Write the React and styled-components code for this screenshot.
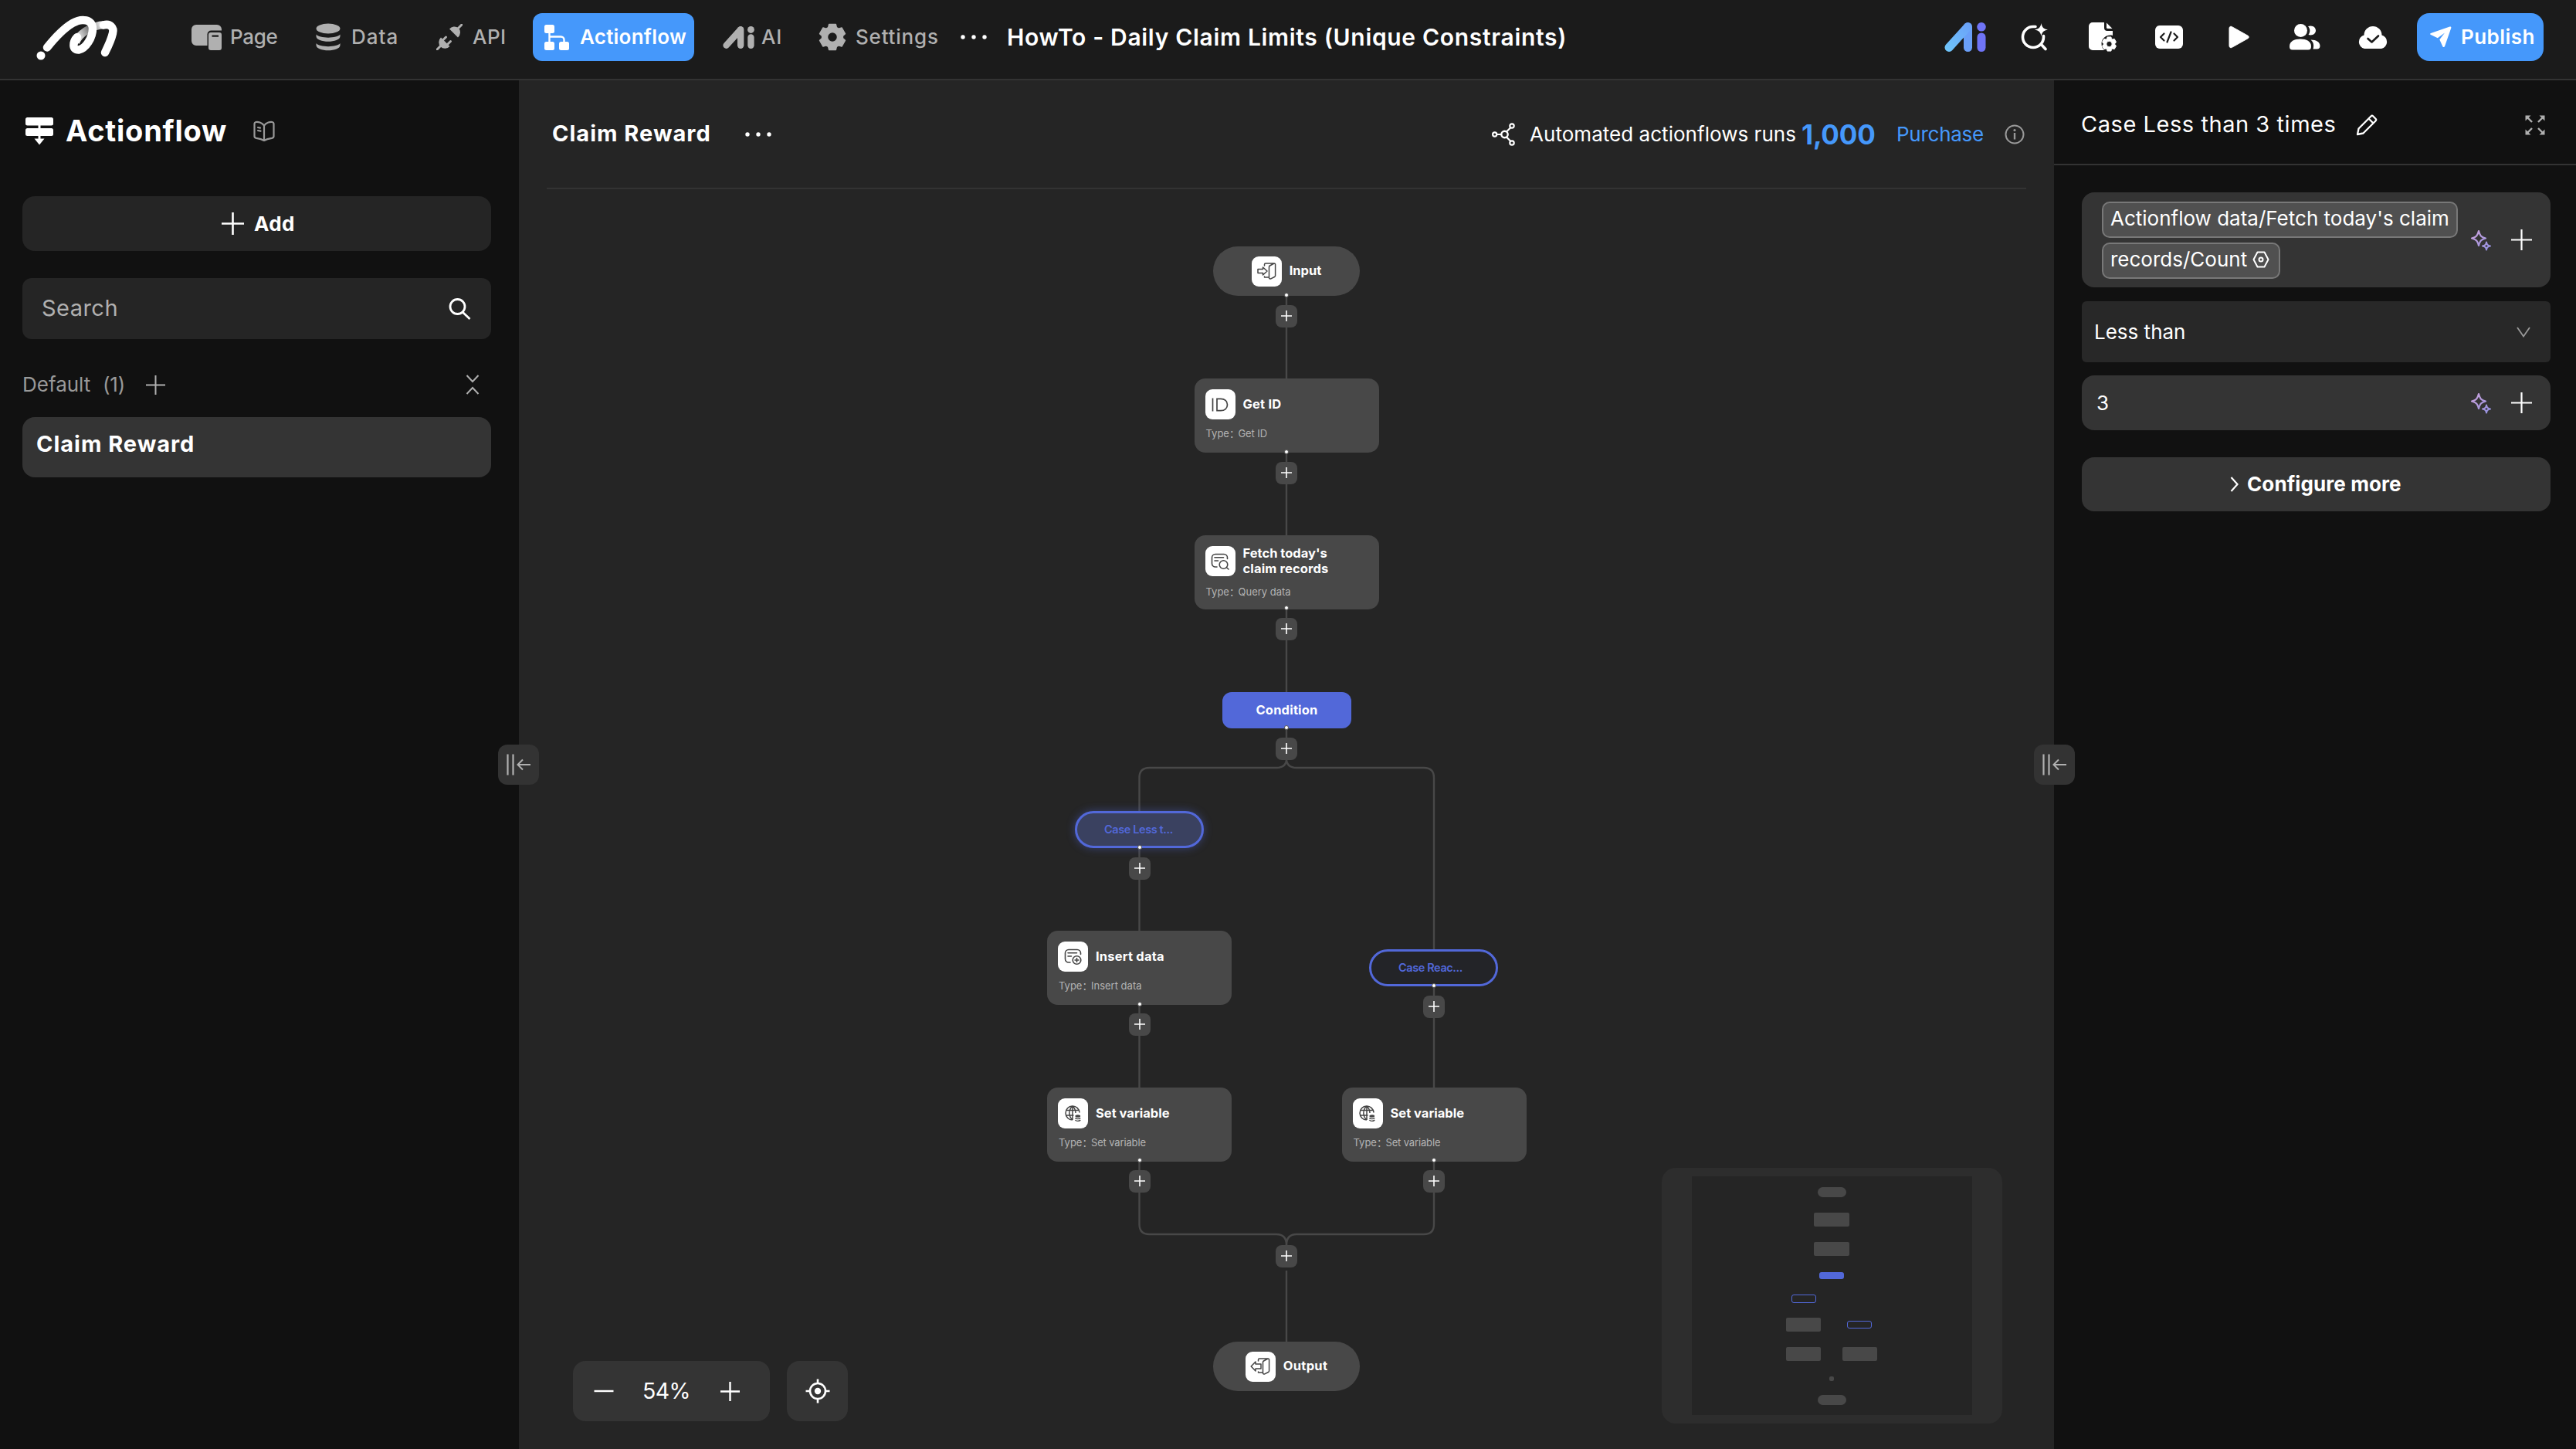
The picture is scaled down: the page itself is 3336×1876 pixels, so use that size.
import React from "react";
import styled, { createGlobalStyle } from "styled-components";

const GlobalStyle = createGlobalStyle`
  * { box-sizing: border-box; }
  html, body { margin: 0; padding: 0; background: #1b1b1b; }
`;

const FAMILY = `Inter, "Noto Sans CJK SC", "Liberation Sans", sans-serif`;

const Shell = styled.div`
  width: 3336px;
  height: 1876px;
  display: flex;
  flex-direction: column;
  overflow: hidden;
  font-family: ${FAMILY};
  color: #fff;
  background: #111;
`;

const Label = styled.span`
  white-space: nowrap;
  line-height: 1.2;
  font-size: ${(p) => p.$size || 26}px;
  font-weight: ${(p) => p.$weight || 400};
  color: ${(p) => p.$color || "inherit"};
  letter-spacing: ${(p) => p.$track || 0}px;
`;

/* ---------- top bar ---------- */
const TopBar = styled.header`
  flex: none;
  height: 104px;
  display: flex;
  align-items: center;
  padding: 0 42px 6px 40px;
  background: #1b1b1b;
  border-bottom: 2px solid #333;
`;
const LogoBox = styled.div`
  width: 120px;
  height: 70px;
  margin-right: 74px;
  display: flex;
`;
const Nav = styled.nav`
  display: flex;
  align-items: center;
  color: #b0b0b0;
`;
const NavItem = styled.div`
  display: flex;
  align-items: center;
  height: 62px;
  width: ${(p) => p.$w}px;
  margin-right: ${(p) => p.$after}px;
  padding-left: 14px;
  gap: ${(p) => p.$gap}px;
  border-radius: 12px;
  background: ${(p) => (p.$active ? "#4598fb" : "transparent")};
  color: ${(p) => (p.$active ? "#fff" : "inherit")};
`;
const Tools = styled.div`
  margin-left: auto;
  display: flex;
  align-items: center;
`;
const ToolSlot = styled.div`
  display: flex;
  width: ${(p) => p.$w}px;
`;
const Publish = styled.div`
  display: flex;
  align-items: center;
  height: 62px;
  width: 164px;
  padding-left: 17px;
  gap: 12px;
  border-radius: 16px;
  background: #4598fb;
`;

/* ---------- columns ---------- */
const Body = styled.div`
  flex: 1;
  min-height: 0;
  display: flex;
`;
const LeftPanel = styled.aside`
  width: 672px;
  flex: none;
  display: flex;
  flex-direction: column;
  padding: 36px 36px 0 29px;
  background: #111;
`;
const PanelTitle = styled.div`
  height: 60px;
  display: flex;
  align-items: center;
  padding-left: 4px;
`;
const TitleText = styled.div`
  display: flex;
  width: 243px;
  margin-left: 16px;
`;
const AddButton = styled.div`
  height: 71px;
  margin-top: 54px;
  display: flex;
  align-items: center;
  padding-left: 258px;
  gap: 13px;
  border-radius: 16px;
  background: #252525;
`;
const SearchBox = styled.div`
  height: 79px;
  margin-top: 35px;
  display: flex;
  align-items: center;
  justify-content: space-between;
  padding: 0 25px;
  border-radius: 12px;
  background: #252525;
`;
const GroupRow = styled.div`
  height: 50px;
  margin-top: 34px;
  display: flex;
  align-items: center;
  color: #999;
`;
const GroupCell = styled.div`
  display: flex;
  width: ${(p) => p.$w}px;
`;
const FlowItem = styled.div`
  height: 78px;
  margin-top: 17px;
  display: flex;
  align-items: center;
  padding: 0 18px 7px;
  border-radius: 16px;
  background: #343434;
`;

const Main = styled.main`
  position: relative;
  z-index: 1;
  width: 1988px;
  flex: none;
  display: flex;
  flex-direction: column;
  background: #252525;
`;
const MainHeader = styled.div`
  height: 141px;
  flex: none;
  margin: 0 36px;
  padding: 0 2px 0 7px;
  display: flex;
  align-items: center;
  border-bottom: 2px solid #333;
`;
const TitleSlot = styled.div`
  display: flex;
  width: 249px;
`;
const Quota = styled.div`
  margin-left: auto;
  display: flex;
  align-items: center;
`;
const QuotaCell = styled.div`
  display: flex;
  align-items: center;
  width: ${(p) => p.$w}px;
`;
const Handle = styled.div`
  position: absolute;
  top: 860px;
  left: ${(p) => p.$left}px;
  width: 53px;
  height: 52px;
  display: flex;
  align-items: center;
  justify-content: center;
  border-radius: 12px;
  background: #333;
`;

/* ---------- canvas ---------- */
const Canvas = styled.div`
  position: relative;
  flex: 1;
`;
const Edges = styled.svg`
  position: absolute;
  left: 0;
  top: 0;
`;
const Placed = styled.div`
  position: absolute;
  left: ${(p) => p.$x}px;
  top: ${(p) => p.$y}px;
`;
const Terminal = styled(Placed)`
  width: 190px;
  height: 64px;
  display: flex;
  align-items: center;
  justify-content: center;
  gap: 10px;
  border-radius: 32px;
  background: #484848;
`;
const Card = styled(Placed)`
  width: 239px;
  height: 96px;
  display: flex;
  flex-direction: column;
  padding: 14px 14px 0;
  border-radius: 14px;
  background: #484848;
`;
const CardHead = styled.div`
  display: flex;
  align-items: center;
  gap: 10px;
  height: 39px;
`;
const CardLines = styled.div`
  display: flex;
  flex-direction: column;
`;
const CardType = styled.div`
  display: flex;
  margin-top: ${(p) => (p.$low ? 13 : 11)}px;
  padding-left: 1px;
  color: #b4b4b4;
`;
const TypeKey = styled.div`
  display: flex;
  width: 42px;
`;
const IconTile = styled.div`
  width: 39px;
  height: 39px;
  flex: none;
  display: flex;
  align-items: center;
  justify-content: center;
  border-radius: 9px;
  background: #fff;
`;
const ConditionNode = styled(Placed)`
  width: 167px;
  height: 47px;
  display: flex;
  align-items: center;
  justify-content: center;
  border-radius: 12px;
  background: #5268d9;
`;
const CaseNode = styled(Placed)`
  width: 167px;
  height: 48px;
  display: flex;
  align-items: center;
  padding: 0 0 1px 35px;
  border: 3px solid #5268d9;
  border-radius: 24px;
  color: #5268d9;
  background: ${(p) => (p.$on ? "#3a4160" : "#232428")};
  box-shadow: ${(p) => (p.$on ? "0 0 12px rgba(82, 104, 217, 0.45)" : "none")};
`;
const PlusBox = styled(Placed)`
  width: 28px;
  height: 29px;
  display: flex;
  align-items: center;
  justify-content: center;
  padding-bottom: 1px;
  border-radius: 8px;
  background: #484848;
`;
const Port = styled(Placed)`
  width: 6px;
  height: 6px;
  border: 1px solid #555;
  border-radius: 3px;
  background: #fff;
`;

const ZoomBar = styled.div`
  position: absolute;
  left: 70px;
  top: 1517px;
  display: flex;
  gap: 22px;
`;
const ZoomGroup = styled.div`
  width: 255px;
  height: 78px;
  display: flex;
  align-items: center;
  padding-left: 27px;
  border-radius: 16px;
  background: #343434;
`;
const ZoomValue = styled.div`
  display: flex;
  width: 101px;
  margin-left: 37px;
`;
const ZoomButton = styled.div`
  width: 79px;
  height: 78px;
  display: flex;
  align-items: center;
  justify-content: center;
  border-radius: 16px;
  background: #343434;
`;

const MiniMap = styled.div`
  position: absolute;
  left: 1480px;
  top: 1267px;
  width: 441px;
  height: 331px;
  display: flex;
  padding: 11px 39px;
  border-radius: 18px;
  background: #2d2d2d;
`;
const MiniView = styled.div`
  position: relative;
  flex: 1;
  background: #252525;
`;
const MiniNode = styled(Placed)`
  width: ${(p) => p.$w}px;
  height: ${(p) => p.$h}px;
  border-radius: ${(p) => p.$r}px;
  background: ${(p) => p.$fill || "transparent"};
  border: ${(p) => (p.$fill ? "none" : "1px solid #5268d9")};
`;

/* ---------- right panel ---------- */
const RightPanel = styled.aside`
  width: 676px;
  flex: none;
  display: flex;
  flex-direction: column;
  background: #111;
`;
const RightHeader = styled.div`
  height: 110px;
  display: flex;
  align-items: center;
  padding: 7px 40px 0 35px;
  border-bottom: 2px solid #333;
`;
const RightTitle = styled.div`
  display: flex;
  width: 356px;
`;
const Spacer = styled.div`
  flex: 1;
`;
const RightBody = styled.div`
  display: flex;
  flex-direction: column;
  padding: 35px 33px 0 36px;
`;
const Field = styled.div`
  height: ${(p) => p.$h}px;
  margin-bottom: ${(p) => p.$after}px;
  display: flex;
  align-items: center;
  justify-content: space-between;
  padding: 0 ${(p) => p.$pr}px 0 ${(p) => p.$pl}px;
  border-radius: ${(p) => p.$r}px;
  background: ${(p) => p.$bg};
`;
const Tags = styled.div`
  display: flex;
  flex-direction: column;
  align-items: flex-start;
  gap: 6px;
`;
const Tag = styled.div`
  height: 47px;
  width: ${(p) => p.$w}px;
  display: flex;
  align-items: center;
  padding: 0 0 2px 9px;
  gap: 7px;
  border: 2px solid #787878;
  border-radius: 10px;
  background: #505050;
`;
const FieldActions = styled.div`
  display: flex;
  align-items: center;
  gap: 25px;
`;
const ConfigureButton = styled.div`
  height: 70px;
  margin-top: 17px;
  display: flex;
  align-items: center;
  padding-left: 192px;
  gap: 11px;
  border-radius: 16px;
  background: #343434;
`;

/* ---------- icons ---------- */
const Glyph = styled.svg`
  flex: none;
`;
const Svg = ({ w, h, children }) => (
  <Glyph width={w} height={h} viewBox={`0 0 ${w} ${h}`} fill="none">
    {children}
  </Glyph>
);

const Logo = () => (
  <Svg w={120} h={70}>
    <defs>
      <linearGradient id="logoShade" x1="58" y1="36" x2="94" y2="16" gradientUnits="userSpaceOnUse">
        <stop offset="0" stopColor="#fff" />
        <stop offset="0.5" stopColor="#777" />
        <stop offset="1" stopColor="#fff" />
      </linearGradient>
    </defs>
    <circle cx="13" cy="59" r="5.5" fill="#fff" />
    <path d="M58 42C62 32 76 20 96 19" stroke="url(#logoShade)" strokeWidth="10" />
    <path d="M94 19.500C103 17 108 23 106 30C104 39 100 47 96 55" stroke="#fff" strokeWidth="10.500" strokeLinecap="round" />
    <path d="M21 48.500C31 36 42 24 54 17C66 10 80 12 80 24C80 36 71 50 62 51.500C53 52 54 41 60 35" stroke="#fff" strokeWidth="10.500" strokeLinecap="round" />
  </Svg>
);
const PageIcon = () => (
  <Svg w={40} h={34}>
    <path d="M6 1H33A6 6 0 0 1 39 7V8.500H26A5 5 0 0 0 20.500 14V28H6A6 6 0 0 1 0 22V7A6 6 0 0 1 6 1Z" fill="#b0b0b0" />
    <path fillRule="evenodd" d="M25 11H36A3 3 0 0 1 39 14V31A3 3 0 0 1 36 34H25A3 3 0 0 1 22 31V14A3 3 0 0 1 25 11ZM26.500 14.500V16.800H35V14.500Z" fill="#b0b0b0" />
  </Svg>
);
const DataIcon = () => (
  <Svg w={32} h={36}>
    <ellipse cx="16" cy="7" rx="15.500" ry="6.500" fill="#b0b0b0" />
    <path d="M0.500 14.500C4 20 28 20 31.500 14.500V17C31.500 26 0.500 26 0.500 17Z" fill="#b0b0b0" />
    <path d="M0.500 26C4 31.500 28 31.500 31.500 26V28.500C31.500 37.500 0.500 37.500 0.500 28.500Z" fill="#b0b0b0" />
  </Svg>
);
const ApiIcon = () => (
  <Svg w={34} h={34}>
    <path d="M1 33L6 28M28 6L33 1" stroke="#b0b0b0" strokeWidth="3" strokeLinecap="round" />
    <path d="M6 17.500L17.500 29A8.500 8.500 0 0 1 5.500 29.500A8.500 8.500 0 0 1 6 17.500Z" fill="#b0b0b0" />
    <path d="M8.500 21L12.500 17M14.500 26.500L18.500 22.500" stroke="#b0b0b0" strokeWidth="3" strokeLinecap="round" />
    <path d="M17 6.500L28 17.500A8.500 8.500 0 0 0 28.500 5A8.500 8.500 0 0 0 17 6.500Z" fill="#b0b0b0" />
  </Svg>
);
const FlowIcon = () => (
  <Svg w={33} h={33}>
    <rect x="1" y="0" width="13" height="11" rx="2.500" fill="#fff" />
    <rect x="1" y="22" width="13" height="11" rx="2.500" fill="#fff" />
    <rect x="20" y="22" width="13" height="11" rx="2.500" fill="#fff" />
    <path d="M7.500 10V23M7.500 15.500H22.500A4 4 0 0 1 26.500 19.500V23" stroke="#fff" strokeWidth="2.400" />
  </Svg>
);
const AiGlyph = ({ w, h, a = "#b0b0b0", b = "#b0b0b0", c = "#b0b0b0" }) => (
  <Glyph width={w} height={h} viewBox="0 0 54 38" fill="none">
    <defs>
      <linearGradient id={`ai${w}`} x1="0" y1="38" x2="34" y2="0" gradientUnits="userSpaceOnUse">
        <stop offset="0" stopColor={a} />
        <stop offset="1" stopColor={b} />
      </linearGradient>
    </defs>
    <path d="M30.500 5.500V32.500" stroke={b} strokeWidth="11" strokeLinecap="round" />
    <path d="M6 32.500L30 6" stroke={`url(#ai${w})`} strokeWidth="11" strokeLinecap="round" />
    <circle cx="48" cy="5.800" r="5.800" fill={c} />
    <path d="M48 19V32.500" stroke={c} strokeWidth="11" strokeLinecap="round" />
  </Glyph>
);
const gearPath = (cx, cy, r, n, tooth) => {
  const pts = [];
  for (let i = 0; i < n; i++) {
    const a = (i * 2 * Math.PI) / n - Math.PI / 2;
    const half = Math.PI / n;
    [[-0.5, r], [0.5, r], [0.78, r - tooth], [1.22, r - tooth]].forEach(([k, rr]) => {
      const t = a + k * half;
      pts.push(`${(cx + rr * Math.cos(t)).toFixed(2)} ${(cy + rr * Math.sin(t)).toFixed(2)}`);
    });
  }
  return `M${pts.join("L")}Z`;
};
const GearIcon = () => (
  <Svg w={36} h={36}>
    <path
      fillRule="evenodd"
      d={`${gearPath(18, 18, 17, 6, 3.5)}M18 11.500A6.500 6.500 0 1 0 18 24.500A6.500 6.500 0 1 0 18 11.500Z`}
      fill="#b0b0b0"
      stroke="#b0b0b0"
      strokeWidth="1.500"
      strokeLinejoin="round"
    />
  </Svg>
);
const Dots = ({ gap = 14 }) => (
  <Svg w={36} h={8}>
    <circle cx={18 - gap} cy="4" r="2.700" fill="#fff" />
    <circle cx="18" cy="4" r="2.700" fill="#fff" />
    <circle cx={18 + gap} cy="4" r="2.700" fill="#fff" />
  </Svg>
);
const SparkSearchIcon = () => (
  <Svg w={36} h={36}>
    <path d="M19 4.500H16A13.500 13.500 0 1 0 29.500 18V16.500M26 27L32 33.500" stroke="#fff" strokeWidth="3.600" strokeLinecap="round" />
    <path d="M26.500 0C27.500 5.500 29.500 7.500 35 8.500C29.500 9.500 27.500 11.500 26.500 17C25.500 11.500 23.500 9.500 18 8.500C23.500 7.500 25.500 5.500 26.500 0Z" fill="#fff" />
  </Svg>
);
const FileGearIcon = () => (
  <Svg w={36} h={38}>
    <path d="M5 0H20V7A4 4 0 0 0 24 11H31V17C24 15 17 20 16.500 27C16.300 31 18 34 20 36H5A5 5 0 0 1 0 31V5A5 5 0 0 1 5 0Z" fill="#fff" />
    <path d="M23 0.500L30.500 8H24.500A1.500 1.500 0 0 1 23 6.500Z" fill="#fff" />
    <path fillRule="evenodd" d={`${gearPath(26.5, 28, 9.4, 6, 2)}M26.500 24.300A3.700 3.700 0 1 0 26.500 31.700A3.700 3.700 0 1 0 26.500 24.300Z`} fill="#fff" stroke="#fff" />
  </Svg>
);
const CodeIcon = () => (
  <Svg w={36} h={30}>
    <rect width="36" height="30" rx="6" fill="#fff" />
    <path d="M11.500 10.500L7 15L11.500 19.500M24.500 10.500L29 15L24.500 19.500M20.500 8.500L15.500 21.500" stroke="#1b1b1b" strokeWidth="2.200" strokeLinecap="round" strokeLinejoin="round" />
  </Svg>
);
const PlayIcon = () => (
  <Svg w={29} h={30}>
    <path d="M2 3.500V26.500C2 28.500 4 29.300 5.500 28.300L26 16.800C27.600 15.900 27.600 14.100 26 13.200L5.500 1.700C4 0.700 2 1.500 2 3.500Z" fill="#fff" stroke="#fff" />
  </Svg>
);
const UsersIcon = () => (
  <Svg w={40} h={34}>
    <circle cx="14.500" cy="8.500" r="8.500" fill="#fff" />
    <path d="M0 29C0 22.500 6 19.500 14 19.500S28 22.500 28 29C28 32 27 33.500 24 33.500H4C1 33.500 0 32 0 29Z" fill="#fff" />
    <path d="M24 3C30 1 34 4.500 34 8.500S30 15.500 24.500 14C27 10.500 27 6.500 24 3Z" fill="#fff" />
    <path d="M27.500 20.500C35 20.500 39.500 23.500 39.500 28.500C39.500 31 38 32.500 35.500 32.500H30.500C32 27.500 31 23.500 27.500 20.500Z" fill="#fff" />
  </Svg>
);
const CloudIcon = () => (
  <Svg w={40} h={30}>
    <path d="M9 30A9 9 0 0 1 8.500 12.500A11.500 11.500 0 0 1 31.500 12.500A9 9 0 0 1 31 30Z" fill="#fff" />
    <path d="M13.500 17L18.500 21.500L27 13.500" stroke="#1b1b1b" strokeWidth="2.600" strokeLinecap="round" strokeLinejoin="round" />
  </Svg>
);
const PlaneIcon = () => (
  <Svg w={28} h={28}>
    <path d="M1 9L25.500 0.600C26.800 0.200 27.700 1 27.300 2.300L19 26C18.500 27.400 17 27.400 16.400 26.200L12.300 17.300L19 8.500L9.800 15.200L1 11C-0.300 10.300 -0.200 9.500 1 9Z" fill="#fff" />
  </Svg>
);
const PlusIcon = ({ size, stroke, color = "#fff" }) => (
  <Svg w={size} h={size}>
    <path d={`M${size / 2} 0V${size}M0 ${size / 2}H${size}`} stroke={color} strokeWidth={stroke} />
  </Svg>
);
const StackDownIcon = () => (
  <Svg w={36} h={36}>
    <rect width="36" height="10.500" rx="2.500" fill="#fff" />
    <rect y="14" width="36" height="10" rx="2.500" fill="#fff" />
    <path d="M18 9V28" stroke="#fff" strokeWidth="3" />
    <path d="M11.500 27.500H24.500L18 35.500Z" fill="#fff" />
  </Svg>
);
const BookIcon = () => (
  <Svg w={28} h={28}>
    <path d="M14 6.500C11 2.500 6 1.500 3.500 2C2 2.300 1.500 3 1.500 4.500V20.500C1.500 22 2.500 22.500 4 22.800C8 23.300 11 24 14 26C17 24 20 23.300 24 22.800C25.500 22.500 26.500 22 26.500 20.500V4.500C26.500 3 26 2.300 24.500 2C22 1.500 17 2.500 14 6.500ZM14 6.500V26M6 9L9 9.600M6 13L9.500 13.600" stroke="#999" strokeWidth="2.200" strokeLinecap="round" strokeLinejoin="round" />
  </Svg>
);
const SearchIcon = () => (
  <Svg w={30} h={28}>
    <circle cx="11.500" cy="11" r="9.500" stroke="#fff" strokeWidth="2.800" />
    <path d="M18 18L27.500 27" stroke="#fff" strokeWidth="2.800" />
  </Svg>
);
const CollapseIcon = () => (
  <Svg w={18} h={26}>
    <path d="M1.500 1L9 9L16.500 1M1.500 25L9 17L16.500 25" stroke="#b0b0b0" strokeWidth="2" />
  </Svg>
);
const NetworkIcon = () => (
  <Svg w={30} h={30}>
    <circle cx="3.700" cy="15" r="2.600" stroke="#fff" strokeWidth="2.200" />
    <circle cx="16.500" cy="15" r="4.200" stroke="#fff" strokeWidth="2.400" />
    <circle cx="26" cy="4" r="2.700" stroke="#fff" strokeWidth="2.200" />
    <circle cx="26" cy="26" r="2.700" stroke="#fff" strokeWidth="2.200" />
    <path d="M6.500 15H12M19 11.500L24 6.500M19 18.500L24 23.500" stroke="#fff" strokeWidth="2.200" />
  </Svg>
);
const InfoIcon = () => (
  <Svg w={26} h={26}>
    <circle cx="13" cy="13" r="11.500" stroke="#999" strokeWidth="2" />
    <path d="M13 11V19.500" stroke="#999" strokeWidth="2.400" />
    <circle cx="13" cy="7.500" r="1.600" fill="#999" />
  </Svg>
);
const HandleIcon = () => (
  <Svg w={34} h={28}>
    <path d="M2.500 0.500V27.500M9.500 0.500V27.500" stroke="#b0b0b0" strokeWidth="2.200" />
    <path d="M32 14H16M22 7.500L15.500 14L22 20.500" stroke="#b0b0b0" strokeWidth="2" />
  </Svg>
);
const DoorIcon = ({ out }) => (
  <Svg w={26} h={22}>
    <path
      d={out ? "M10 8H7V5L1.200 11L7 17V14H14V8H10Z" : "M2 8.500H8.500V6L14 11L8.500 16V13.500H2Z"}
      stroke="#444"
      strokeWidth="1.500"
      strokeLinejoin="round"
    />
    <path d="M10.500 4V2.500A1.500 1.500 0 0 1 12 1H23L17.500 4A2 2 0 0 0 16.500 5.500V19.500A1.500 1.500 0 0 0 18.800 20.800L23.500 18.500A2 2 0 0 0 24.600 17V2.500A1.500 1.500 0 0 0 23 1M10.500 18V19H16" stroke="#444" strokeWidth="1.500" strokeLinejoin="round" strokeLinecap="round" />
  </Svg>
);
const IdIcon = () => (
  <Svg w={22} h={18}>
    <path d="M1.500 0.500V17.500M7 1.300V16.700H12C17 16.700 20.500 13.500 20.500 9S17 1.300 12 1.300Z" stroke="#444" strokeWidth="1.700" />
  </Svg>
);
const TableIcon = ({ kind }) => (
  <Svg w={24} h={22}>
    <path d="M8 18H6A4.500 4.500 0 0 1 1.500 13.500V6A4.500 4.500 0 0 1 6 1.500H17A4.500 4.500 0 0 1 21.500 6V7.500M5 5.800H16.500M5 10H9.500" stroke="#444" strokeWidth="1.600" strokeLinecap="round" />
    <circle cx="16.500" cy="15" r="5.300" stroke="#444" strokeWidth="1.600" />
    {kind === "query" ? (
      <path d="M20.300 18.500L23 21" stroke="#444" strokeWidth="1.600" strokeLinecap="round" />
    ) : (
      <path d="M16.500 12V18M13.500 15H19.500" stroke="#444" strokeWidth="1.600" />
    )}
  </Svg>
);
const GlobeIcon = () => (
  <Svg w={22} h={22}>
    <path d="M10 19A9 9 0 1 1 19 9.500M10 1C4.500 6 4.500 14 10 19M10 1C13 4 14 7 14 10M1.500 6.500H18.500M1.500 13H11.500M10 1V19" stroke="#444" strokeWidth="1.500" />
    <ellipse cx="16.800" cy="14" rx="3.400" ry="1.800" fill="#444" />
    <path d="M13.400 16.500C14.500 18 19 18 20.200 16.500M13.400 19C14.500 20.800 19 20.800 20.200 19" stroke="#444" strokeWidth="1.400" />
  </Svg>
);
const TargetIcon = () => (
  <Svg w={32} h={32}>
    <circle cx="16" cy="16" r="10" stroke="#fff" strokeWidth="2.600" />
    <circle cx="16" cy="16" r="4.200" fill="#fff" />
    <path d="M16 0.500V6M16 26V31.500M0.500 16H6M26 16H31.500" stroke="#fff" strokeWidth="2.600" />
  </Svg>
);
const PencilIcon = () => (
  <Svg w={28} h={28}>
    <path d="M2 26L3.500 18.500L19.500 2.500A2 2 0 0 1 22.300 2.500L25.500 5.700A2 2 0 0 1 25.500 8.500L9.500 24.500ZM16.500 5.500L22.500 11.500" stroke="#fff" strokeWidth="2.300" strokeLinejoin="round" />
  </Svg>
);
const ExpandIcon = () => (
  <Svg w={26} h={26}>
    {[0, 90, 180, 270].map((r) => (
      <g key={r} transform={`rotate(${r} 13 13)`}>
        <path d="M0.500 0.500H7.500L0.500 7.500Z" fill="#b0b0b0" />
        <path d="M2.500 2.500L9 9" stroke="#b0b0b0" strokeWidth="2.400" />
      </g>
    ))}
  </Svg>
);
const HexIcon = () => (
  <Svg w={22} h={22}>
    <path d="M6.500 1.500H15.500L20.500 11L15.500 20.500H6.500L1.500 11Z" stroke="#fff" strokeWidth="2" strokeLinejoin="round" />
    <circle cx="11" cy="11" r="2.500" stroke="#fff" strokeWidth="2" />
  </Svg>
);
const SparklesIcon = () => (
  <Svg w={28} h={28}>
    <defs>
      <linearGradient id="spark" x1="0" y1="0" x2="28" y2="28" gradientUnits="userSpaceOnUse">
        <stop offset="0" stopColor="#d0a4dc" />
        <stop offset="1" stopColor="#8f8fe0" />
      </linearGradient>
    </defs>
    <path d="M11 2C12.500 8 14 10 20 11.500C14 13 12.500 15 11 21C9.500 15 8 13 2 11.500C8 10 9.500 8 11 2Z" stroke="url(#spark)" strokeWidth="2.200" strokeLinejoin="round" />
    <path d="M21 16.500C21.700 20 22.500 20.800 26 21.500C22.500 22.200 21.700 23 21 26.500C20.300 23 19.500 22.200 16 21.500C19.500 20.800 20.300 20 21 16.500Z" stroke="url(#spark)" strokeWidth="2" strokeLinejoin="round" />
  </Svg>
);
const ChevronDown = () => (
  <Svg w={18} h={14}>
    <path d="M1 1L9 12.500L17 1" stroke="#999" strokeWidth="1.800" />
  </Svg>
);
const ChevronRight = () => (
  <Svg w={11} h={20}>
    <path d="M1.500 1L9.500 10L1.500 19" stroke="#fff" strokeWidth="2.200" />
  </Svg>
);

/* ---------- flow graph ---------- */
const MID = 994;
const LEFT = 803.5;
const RIGHT = 1185;

const NODE_ICONS = {
  id: <IdIcon />,
  query: <TableIcon kind="query" />,
  insert: <TableIcon kind="insert" />,
  globe: <GlobeIcon />,
};
const cards = [
  { x: MID, y: 245, icon: "id", lines: [["Get ID", 0.2]], type: ["Get ID", -0.1] },
  { x: MID, y: 448, icon: "query", lines: [["Fetch today's", 0], ["claim records", 0.14]], type: ["Query data", 0] },
  { x: LEFT, y: 960, icon: "insert", lines: [["Insert data", 0.2]], type: ["Insert data", 0] },
  { x: LEFT, y: 1163, icon: "globe", lines: [["Set variable", 0]], type: ["Set variable", -0.15] },
  { x: RIGHT, y: 1163, icon: "globe", lines: [["Set variable", 0]], type: ["Set variable", -0.15] },
];
const pluses = [
  [MID, 150], [MID, 353], [MID, 555], [MID, 710], [LEFT, 865],
  [LEFT, 1067], [LEFT, 1270], [RIGHT, 1044], [RIGHT, 1270], [MID, 1367],
];
const ports = [
  [MID, 137], [MID, 340], [MID, 542], [MID, 697], [LEFT, 852],
  [LEFT, 1055], [LEFT, 1257], [RIGHT, 1031], [RIGHT, 1257],
];
const edgePaths = [
  `M${MID} 138V651`,
  `M${MID} 697V737Q${MID} 749 ${MID - 13} 749H${LEFT + 13}Q${LEFT} 749 ${LEFT} 762V805`,
  `M${MID} 737Q${MID} 749 ${MID + 13} 749H${RIGHT - 13}Q${RIGHT} 749 ${RIGHT} 762V984`,
  `M${LEFT} 853V1163`,
  `M${RIGHT} 1032V1163`,
  `M${LEFT} 1258V1340Q${LEFT} 1353 ${LEFT + 13} 1353H${MID - 13}Q${MID} 1353 ${MID} 1367`,
  `M${RIGHT} 1258V1340Q${RIGHT} 1353 ${RIGHT - 13} 1353H${MID + 13}Q${MID} 1353 ${MID} 1367`,
  `M${MID} 1400V1492`,
];
const miniNodes = [
  [163, 14, 37, 13, 7, "#484848"],
  [158, 47, 46, 18, 2, "#484848"],
  [158, 85, 46, 18, 2, "#484848"],
  [165, 124, 32, 9, 3, "#5268d9"],
  [129, 153, 32, 11, 3, null],
  [122, 183, 45, 18, 2, "#484848"],
  [201, 187, 32, 10, 3, null],
  [122, 221, 45, 18, 2, "#484848"],
  [195, 221, 45, 18, 2, "#484848"],
  [178, 259, 6, 6, 2, "#484848"],
  [163, 283, 37, 13, 7, "#484848"],
];

const FlowCanvas = () => (
  <Canvas>
    <Edges width="1988" height="1631">
      {edgePaths.map((d) => (
        <path key={d} d={d} fill="none" stroke="#484848" strokeWidth="2.400" />
      ))}
    </Edges>
    <Terminal $x={899} $y={74}>
      <IconTile><DoorIcon /></IconTile>
      <Label $size={16.5} $weight={700}>Input</Label>
    </Terminal>
    {cards.map((c) => (
      <Card key={`${c.x}-${c.y}`} $x={c.x - 119.5} $y={c.y}>
        <CardHead>
          <IconTile>{NODE_ICONS[c.icon]}</IconTile>
          <CardLines>
            {c.lines.map(([t, track]) => (
              <Label key={t} $size={16.5} $weight={700} $track={track}>{t}</Label>
            ))}
          </CardLines>
        </CardHead>
        <CardType $low={c.lines.length > 1}>
          <TypeKey><Label $size={13}>Type：</Label></TypeKey>
          <Label $size={13} $track={c.type[1]}>{c.type[0]}</Label>
        </CardType>
      </Card>
    ))}
    <ConditionNode $x={911} $y={651}>
      <Label $size={16.5} $weight={700} $track={0.2}>Condition</Label>
    </ConditionNode>
    <CaseNode $on $x={720} $y={805}>
      <Label $size={14.5} $weight={600} $track={-0.4}>Case Less t...</Label>
    </CaseNode>
    <CaseNode $x={1101} $y={984}>
      <Label $size={14.5} $weight={600} $track={-0.4}>Case Reac...</Label>
    </CaseNode>
    <Terminal $x={899} $y={1492}>
      <IconTile><DoorIcon out /></IconTile>
      <Label $size={16.5} $weight={700} $track={0.3}>Output</Label>
    </Terminal>
    {pluses.map(([x, y]) => (
      <PlusBox key={`${x}-${y}`} $x={x - 14} $y={y}><PlusIcon size={14} stroke={1.6} /></PlusBox>
    ))}
    {ports.map(([x, y]) => (
      <Port key={`${x}-${y}`} $x={x - 3} $y={y - 3} />
    ))}
    <ZoomBar>
      <ZoomGroup>
        <Svg w={26} h={26}><path d="M0.500 13H25.500" stroke="#fff" strokeWidth="2.400" /></Svg>
        <ZoomValue><Label $size={28.5} $track={-0.6}>54%</Label></ZoomValue>
        <PlusIcon size={25} stroke={2.4} />
      </ZoomGroup>
      <ZoomButton><TargetIcon /></ZoomButton>
    </ZoomBar>
    <MiniMap>
      <MiniView>
        {miniNodes.map(([x, y, w, h, r, fill]) => (
          <MiniNode key={`${x}-${y}`} $x={x} $y={y} $w={w} $h={h} $r={r} $fill={fill} />
        ))}
      </MiniView>
    </MiniMap>
  </Canvas>
);

export default function App() {
  return (
    <Shell>
      <GlobalStyle />
      <TopBar>
        <LogoBox><Logo /></LogoBox>
        <Nav>
          <NavItem $w={138} $after={23} $gap={10}><PageIcon /><Label $weight={500} $track={-0.3}>Page</Label></NavItem>
          <NavItem $w={135} $after={21} $gap={14}><DataIcon /><Label $weight={500} $track={1}>Data</Label></NavItem>
          <NavItem $w={118} $after={21} $gap={13}><ApiIcon /><Label $weight={500} $track={0.5}>API</Label></NavItem>
          <NavItem $w={209} $after={23} $gap={14} $active><FlowIcon /><Label $weight={600} $track={0.24}>Actionflow</Label></NavItem>
          <NavItem $w={104} $after={20} $gap={9}><AiGlyph w={41} h={29} /><Label $weight={500} $track={0.8}>AI</Label></NavItem>
          <NavItem $w={183} $after={14} $gap={12}><GearIcon /><Label $weight={500} $track={0.8}>Settings</Label></NavItem>
        </Nav>
        <ToolSlot $w={61}><Dots /></ToolSlot>
        <Label $size={30} $weight={600} $track={0.68}>HowTo - Daily Claim Limits (Unique Constraints)</Label>
        <Tools>
          <ToolSlot $w={99}><AiGlyph w={54} h={38} a="#6fc8fb" b="#6a9ff8" c="#6f74f7" /></ToolSlot>
          <ToolSlot $w={88}><SparkSearchIcon /></ToolSlot>
          <ToolSlot $w={86}><FileGearIcon /></ToolSlot>
          <ToolSlot $w={94}><CodeIcon /></ToolSlot>
          <ToolSlot $w={80}><PlayIcon /></ToolSlot>
          <ToolSlot $w={88}><UsersIcon /></ToolSlot>
          <ToolSlot $w={77}><CloudIcon /></ToolSlot>
          <Publish><PlaneIcon /><Label $weight={600} $track={0.45}>Publish</Label></Publish>
        </Tools>
      </TopBar>
      <Body>
        <LeftPanel>
          <PanelTitle>
            <StackDownIcon />
            <TitleText><Label $size={38} $weight={700} $track={0.75}>Actionflow</Label></TitleText>
            <BookIcon />
          </PanelTitle>
          <AddButton><PlusIcon size={29} stroke={2.6} /><Label $weight={700} $track={0.4}>Add</Label></AddButton>
          <SearchBox><Label $size={29} $color="#b0b0b0" $track={0.46}>Search</Label><SearchIcon /></SearchBox>
          <GroupRow>
            <GroupCell $w={104}><Label>Default</Label></GroupCell>
            <GroupCell $w={56}><Label $track={-0.2}>(1)</Label></GroupCell>
            <PlusIcon size={25} stroke={2} color="#b0b0b0" />
            <Spacer />
            <GroupCell $w={33}><CollapseIcon /></GroupCell>
          </GroupRow>
          <FlowItem><Label $size={29} $weight={700} $track={0.97}>Claim Reward</Label></FlowItem>
        </LeftPanel>
        <Main>
          <MainHeader>
            <TitleSlot><Label $size={29} $weight={700} $track={1}>Claim Reward</Label></TitleSlot>
            <Dots gap={14} />
            <Quota>
              <QuotaCell $w={49}><NetworkIcon /></QuotaCell>
              <QuotaCell $w={352}><Label $track={0.04}>Automated actionflows runs</Label></QuotaCell>
              <QuotaCell $w={123}><Label $size={35} $weight={700} $color="#4598fb" $track={-0.2}>1,000</Label></QuotaCell>
              <QuotaCell $w={140}><Label $color="#4598fb" $track={-0.26}>Purchase</Label></QuotaCell>
              <InfoIcon />
            </Quota>
          </MainHeader>
          <FlowCanvas />
          <Handle $left={-27}><HandleIcon /></Handle>
          <Handle $left={1962}><HandleIcon /></Handle>
        </Main>
        <RightPanel>
          <RightHeader>
            <RightTitle><Label $size={29} $track={0.55}>Case Less than 3 times</Label></RightTitle>
            <PencilIcon />
            <Spacer />
            <ExpandIcon />
          </RightHeader>
          <RightBody>
            <Field $h={123} $after={18} $pl={26} $pr={24} $r={16} $bg="#343434">
              <Tags>
                <Tag $w={461}><Label>Actionflow data/Fetch today's claim</Label></Tag>
                <Tag $w={231}><Label>records/Count</Label><HexIcon /></Tag>
              </Tags>
              <FieldActions><SparklesIcon /><PlusIcon size={27} stroke={2.2} /></FieldActions>
            </Field>
            <Field $h={79} $after={17} $pl={16} $pr={26} $r={6} $bg="#282828">
              <Label>Less than</Label>
              <ChevronDown />
            </Field>
            <Field $h={71} $after={18} $pl={19} $pr={24} $r={16} $bg="#343434">
              <Label>3</Label>
              <FieldActions><SparklesIcon /><PlusIcon size={27} stroke={2.2} /></FieldActions>
            </Field>
            <ConfigureButton><ChevronRight /><Label $weight={700} $track={0.1}>Configure more</Label></ConfigureButton>
          </RightBody>
        </RightPanel>
      </Body>
    </Shell>
  );
}
